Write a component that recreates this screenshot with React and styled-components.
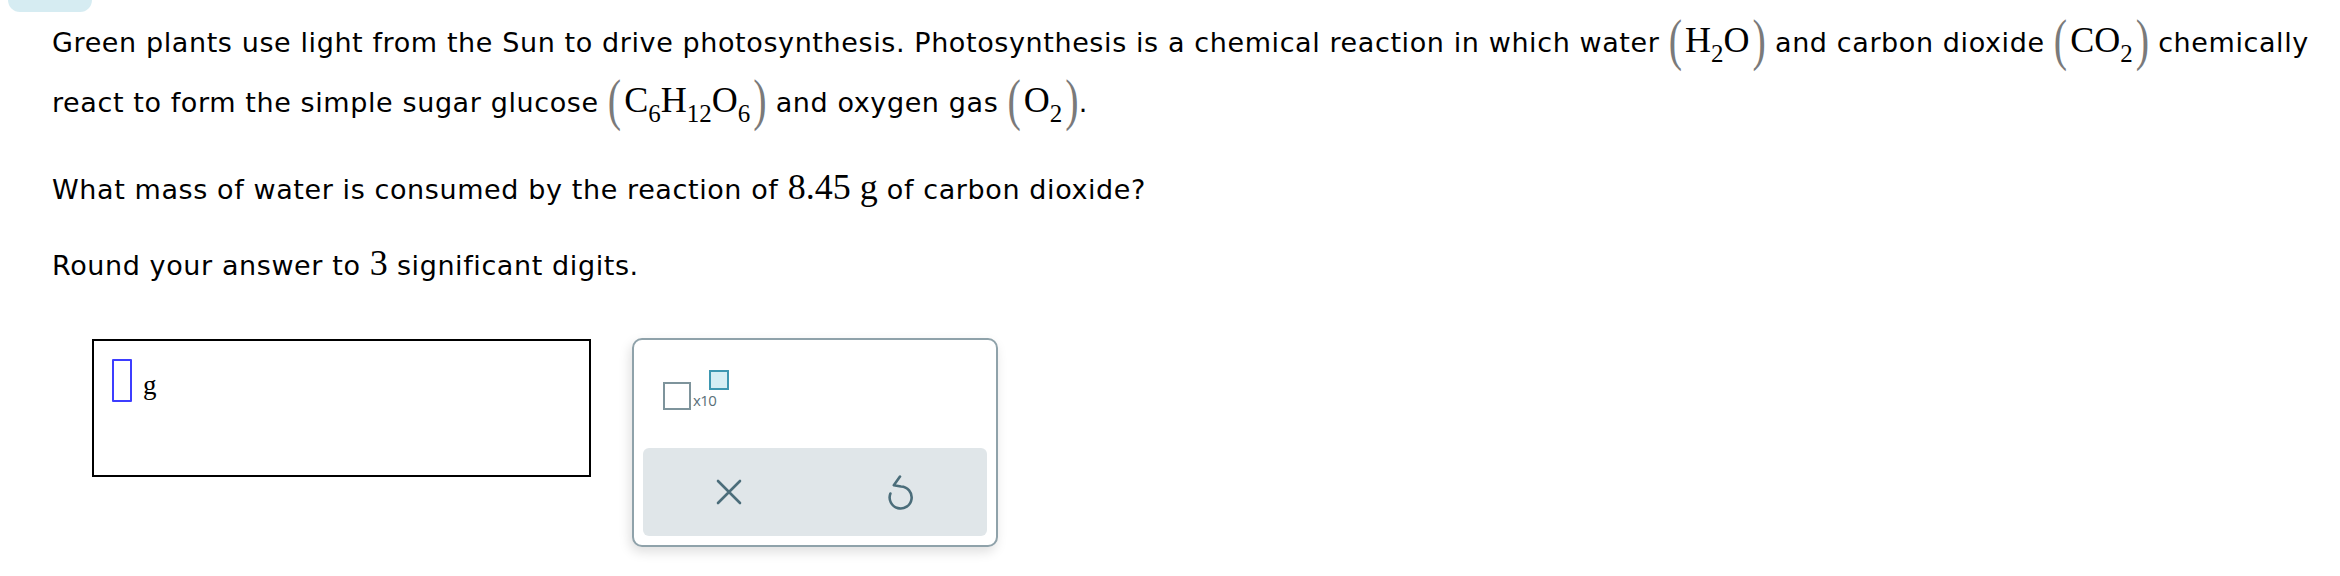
import React from "react";
import styled, { createGlobalStyle } from "styled-components";

const Global = createGlobalStyle`
  html, body { margin: 0; padding: 0; background: #fff; }
  body { font-family: "DejaVu Sans", Verdana, sans-serif; color: #000; }
`;

const Page = styled.div`
  width: 2340px;
  height: 576px;
  overflow: hidden;
  display: flex;
  flex-direction: column;
`;

const Tab = styled.div`
  flex-shrink: 0;
  margin-left: 8px;
  width: 84px;
  height: 12px;
  background: #d6ecf2;
  border-radius: 0 0 12px 12px;
`;

const Question = styled.div`
  padding-left: 52px;
`;

const Para = styled.p`
  margin: ${(p) => p.$top}px 0 0;
  font-size: 27px;
  letter-spacing: 0.6px;
  line-height: 60px;
  white-space: nowrap;
`;

const Formula = styled.span`
  font-family: "Liberation Serif", "Times New Roman", serif;
  font-size: 36px;
  letter-spacing: 0;
  line-height: 0;
`;

const Sub = styled.span`
  font-size: 25px;
  line-height: 0;
  vertical-align: -10px;
`;

const Paren = styled.span`
  display: inline-block;
  font-family: "Liberation Serif", "Times New Roman", serif;
  font-size: 40px;
  line-height: 0;
  color: #7a7a7a;
  transform: translateY(2px) scaleY(1.4);
  transform-origin: 50% 0;
  margin: ${(p) => (p.$side === "l" ? "0 3px 0 0" : "0 0 0 3px")};
`;

const AnswerRow = styled.div`
  display: flex;
  align-items: flex-start;
  margin-top: 42px;
  padding-left: 92px;
`;

const AnswerBox = styled.div`
  box-sizing: border-box;
  width: 499px;
  height: 138px;
  border: 2px solid #000;
  margin-top: 1px;
  padding: 18px 0 0 18px;
  display: flex;
  align-items: flex-start;
`;

const Cursor = styled.div`
  box-sizing: border-box;
  width: 20px;
  height: 43px;
  border: 2px solid #3d3dff;
  border-radius: 1px;
`;

const Unit = styled.span`
  font-family: "Liberation Serif", "Times New Roman", serif;
  font-size: 27px;
  line-height: 27px;
  margin: 13px 0 0 11px;
`;

const Keypad = styled.div`
  box-sizing: border-box;
  margin-left: 41px;
  width: 366px;
  height: 209px;
  border: 2px solid #8fa2aa;
  border-radius: 10px;
  background: #fff;
  box-shadow: -2px 5px 12px rgba(0, 0, 0, 0.13);
  display: flex;
  flex-direction: column;
  padding: 0 9px 9px;
`;

const KeyArea = styled.div`
  flex: 1;
  display: flex;
  align-items: flex-start;
  padding: 30px 0 0 20px;
`;

const SciKey = styled.div`
  display: flex;
  align-items: flex-start;
`;

const BaseBox = styled.div`
  box-sizing: border-box;
  width: 28px;
  height: 28px;
  margin-top: 12px;
  border: 2.5px solid #7e949c;
`;

const SciLabel = styled.span`
  font-family: "Open Sans", "DejaVu Sans", sans-serif;
  font-size: 15px;
  line-height: 15px;
  letter-spacing: -0.6px;
  color: #5a6f78;
  margin: 23px 0 0 2px;
`;

const ExpBox = styled.div`
  box-sizing: border-box;
  width: 20px;
  height: 20px;
  margin-left: -7px;
  border: 2.5px solid #3d97b1;
  background: #d5eef4;
`;

const ActionStrip = styled.div`
  height: 88px;
  border-radius: 6px;
  background: #e0e6e9;
  display: grid;
  grid-template-columns: 1fr 1fr;
`;

const ActionButton = styled.button`
  border: none;
  background: transparent;
  padding: 0;
  display: flex;
  align-items: center;
  justify-content: center;
  color: #4b6d7a;
  cursor: pointer;
`;

const CloseIcon = () => (
  <svg width="26" height="26" viewBox="0 0 26 26" fill="none">
    <path d="M2 2 L24 24 M24 2 L2 24" stroke="currentColor" strokeWidth="2.6" strokeLinecap="round" />
  </svg>
);

const UndoIcon = () => (
  <svg width="28" height="36" viewBox="0 0 28 36" fill="none">
    <path
      d="M13 2.5 L6.8 11.2 L14 12.5 A11 11 0 1 1 3.4 19.5"
      stroke="currentColor"
      strokeWidth="2.6"
      strokeLinecap="round"
      strokeLinejoin="round"
    />
  </svg>
);

const Chem = ({ children }) => (
  <Formula>
    <Paren $side="l">(</Paren>
    {children}
    <Paren $side="r">)</Paren>
  </Formula>
);

export default function App() {
  return (
    <>
      <Global />
      <Page>
        <Tab />
        <Question>
          <Para $top={1}>
            Green plants use light from the Sun to drive photosynthesis. Photosynthesis is a chemical reaction in which
            water{" "}
            <Chem>
              H<Sub>2</Sub>O
            </Chem>{" "}
            and carbon dioxide{" "}
            <Chem>
              CO<Sub>2</Sub>
            </Chem>{" "}
            chemically
            <br />
            react to form the simple sugar glucose{" "}
            <Chem>
              C<Sub>6</Sub>H<Sub>12</Sub>O<Sub>6</Sub>
            </Chem>{" "}
            and oxygen gas{" "}
            <Chem>
              O<Sub>2</Sub>
            </Chem>
            .
          </Para>
          <Para $top={27}>
            What mass of water is consumed by the reaction of <Formula>8.45 g</Formula> of carbon dioxide?
          </Para>
          <Para $top={16}>
            Round your answer to <Formula>3</Formula> significant digits.
          </Para>
        </Question>
        <AnswerRow>
          <AnswerBox>
            <Cursor />
            <Unit>g</Unit>
          </AnswerBox>
          <Keypad>
            <KeyArea>
              <SciKey>
                <BaseBox />
                <SciLabel>x10</SciLabel>
                <ExpBox />
              </SciKey>
            </KeyArea>
            <ActionStrip>
              <ActionButton aria-label="clear">
                <CloseIcon />
              </ActionButton>
              <ActionButton aria-label="undo">
                <UndoIcon />
              </ActionButton>
            </ActionStrip>
          </Keypad>
        </AnswerRow>
      </Page>
    </>
  );
}
